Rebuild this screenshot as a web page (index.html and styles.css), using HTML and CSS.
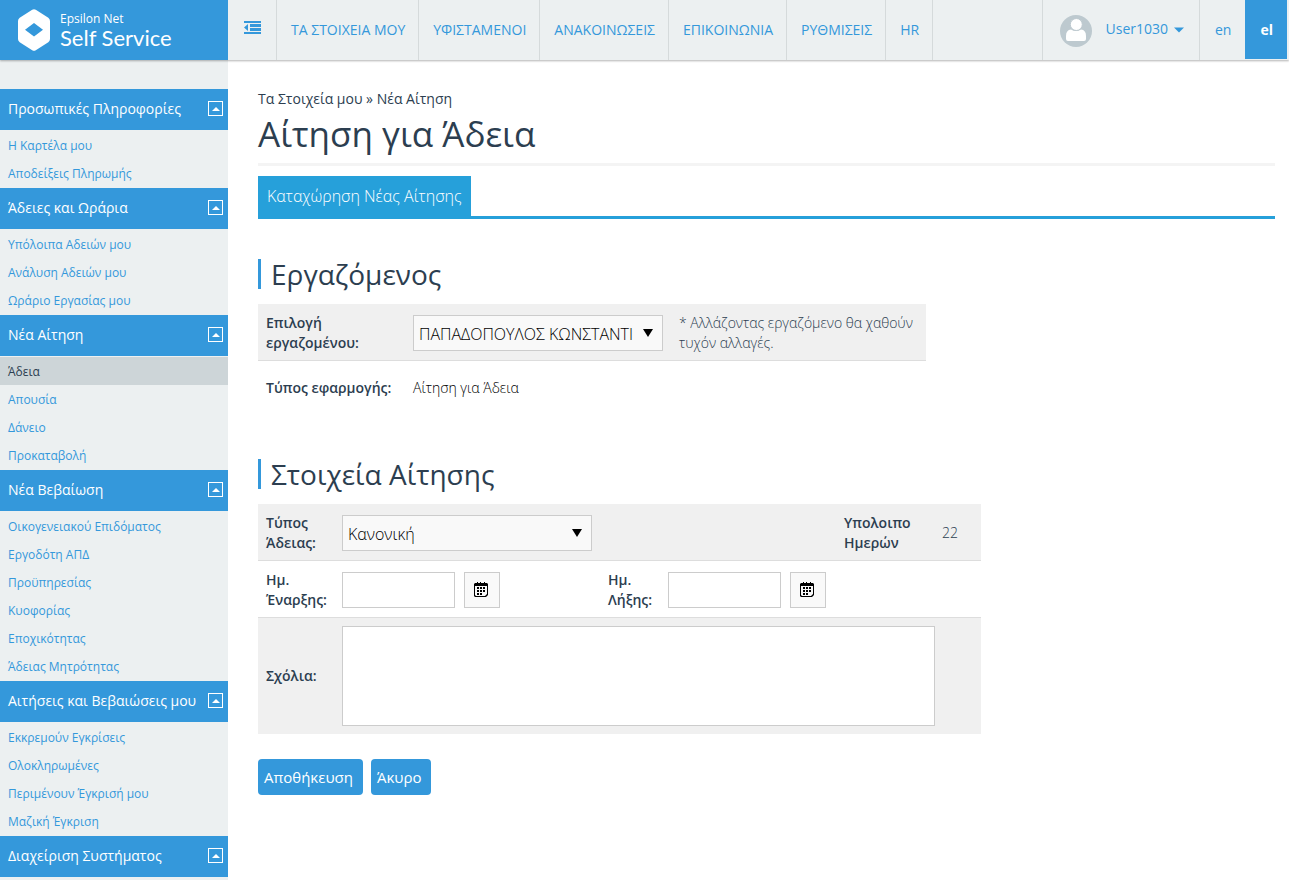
FILE: index.html
```html
<!DOCTYPE html>
<html lang="el">
<head>
<meta charset="utf-8">
<title>Αίτηση για Άδεια</title>
<link rel="stylesheet" href="styles.css">
</head>
<body>
<header class="topbar">
  <a class="brand" href="#">
    <svg class="brand-mark" width="32" height="42" viewBox="0 0 32 42" aria-hidden="true"><path fill="#fff" fill-rule="evenodd" d="M14.2.8Q16-.4 17.800.8L30.300 8.800Q32 10 32 12V30Q32 32 30.300 33.200L17.800 41.200Q16 42.400 14.200 41.200L1.700 33.200Q0 32 0 30V12Q0 10 1.700 8.800ZM16 14L7 20.700 16 27.400 25 20.700Z"/></svg>
    <span class="brand-text"><span class="brand-small">Epsilon Net</span><span class="brand-big">Self Service</span></span>
  </a>
  <button class="toggle" type="button" aria-label="Μενού">
    <svg width="17" height="13" viewBox="0 0 17 13" aria-hidden="true"><path fill="#3498db" d="M0 0h17v2H0zM6 3h11v3H6zM6 7h11v3H6zM0 11h17v2H0zM4 3v7L0 6.500z"/></svg>
  </button>
  <nav class="nav">
    <a href="#">ΤΑ ΣΤΟΙΧΕΙΑ ΜΟΥ</a>
    <a href="#">ΥΦΙΣΤΑΜΕΝΟΙ</a>
    <a href="#">ΑΝΑΚΟΙΝΩΣΕΙΣ</a>
    <a href="#">ΕΠΙΚΟΙΝΩΝΙΑ</a>
    <a href="#">ΡΥΘΜΙΣΕΙΣ</a>
    <a href="#">HR</a>
  </nav>
  <button class="user" type="button">
    <svg width="32" height="32" viewBox="0 0 32 32" aria-hidden="true"><circle cx="16" cy="16" r="16" fill="#bdc9cf"/><path fill="#fff" d="M6 24v-3q0-6 5-6.500 5 3 10 0 5 .5 5 6.500v3q0 2-2 2H8q-2 0-2-2z"/><circle cx="16.300" cy="9.500" r="6" fill="#fff" stroke="#bdc9cf"/></svg>
    <span>User1030</span>
    <svg class="caret" width="10" height="6" viewBox="0 0 10 6" aria-hidden="true"><path fill="#3498db" d="M0 .5h10L5 5.500z"/></svg>
  </button>
  <a class="lang" href="#">en</a>
  <a class="lang lang-active" href="#">el</a>
</header>
<div class="layout">
  <aside class="sidebar">
    <section><h3><button type="button">Προσωπικές Πληροφορίες<i class="fold"></i></button></h3>
      <ul><li><a href="#">Η Καρτέλα μου</a></li><li><a href="#">Αποδείξεις Πληρωμής</a></li></ul></section>
    <section><h3><button type="button">Άδειες και Ωράρια<i class="fold"></i></button></h3>
      <ul><li><a href="#">Υπόλοιπα Αδειών μου</a></li><li><a href="#">Ανάλυση Αδειών μου</a></li><li><a href="#">Ωράριο Εργασίας μου</a></li></ul></section>
    <section><h3><button type="button">Νέα Αίτηση<i class="fold"></i></button></h3>
      <ul><li><a class="current" href="#">Άδεια</a></li><li><a href="#">Απουσία</a></li><li><a href="#">Δάνειο</a></li><li><a href="#">Προκαταβολή</a></li></ul></section>
    <section><h3><button type="button">Νέα Βεβαίωση<i class="fold"></i></button></h3>
      <ul><li><a href="#">Οικογενειακού Επιδόματος</a></li><li><a href="#">Εργοδότη ΑΠΔ</a></li><li><a href="#">Προϋπηρεσίας</a></li><li><a href="#">Κυοφορίας</a></li><li><a href="#">Εποχικότητας</a></li><li><a href="#">Άδειας Μητρότητας</a></li></ul></section>
    <section><h3><button type="button">Αιτήσεις και Βεβαιώσεις μου<i class="fold"></i></button></h3>
      <ul><li><a href="#">Εκκρεμούν Εγκρίσεις</a></li><li><a href="#">Ολοκληρωμένες</a></li><li><a href="#">Περιμένουν Έγκρισή μου</a></li><li><a href="#">Μαζική Έγκριση</a></li></ul></section>
    <section><h3><button type="button">Διαχείριση Συστήματος<i class="fold"></i></button></h3></section>
  </aside>
  <main class="content">
    <p class="crumbs">Τα Στοιχεία μου » Νέα Αίτηση</p>
    <h1>Αίτηση για Άδεια</h1>
    <div class="tabs"><button type="button" class="tab">Καταχώρηση Νέας Αίτησης</button></div>
    <form>
      <h2>Εργαζόμενος</h2>
      <div class="panel">
        <div class="row row-employee shaded">
          <label for="employee">Επιλογή εργαζομένου:</label>
          <span class="select"><select id="employee"><option>ΠΑΠΑΔΟΠΟΥΛΟΣ ΚΩΝΣΤΑΝΤΙ</option></select></span>
          <span class="note">* Αλλάζοντας εργαζόμενο θα χαθούν τυχόν αλλαγές.</span>
        </div>
        <div class="row row-employee last">
          <span class="label">Τύπος εφαρμογής:</span>
          <span class="value">Αίτηση για Άδεια</span>
        </div>
      </div>
      <h2>Στοιχεία Αίτησης</h2>
      <div class="panel">
        <div class="row row-request shaded">
          <label for="kind">Τύπος Άδειας:</label>
          <span class="select"><select id="kind"><option>Κανονική</option></select></span>
          <span class="label days">Υπολοιπο Ημερών</span>
          <span class="note">22</span>
        </div>
        <div class="row row-request">
          <label for="from">Ημ. Έναρξης:</label>
          <span class="date"><input id="from" type="text"><button type="button" aria-label="Ημερολόγιο έναρξης"><svg width="14" height="15" viewBox="0 0 14 15" aria-hidden="true"><path fill="#000" fill-rule="evenodd" d="M3 0h1v1h2V0h1v1h3V0h1v1h2l1 1v11l-2 2H1l-1-1V2l1-1h2zM1 4v9l1 1h9l2-2V4z"/><path fill="#000" d="M6 5h2v2H6zM9 5h2v2H9zM3 8h2v2H3zM6 8h2v2H6zM9 8h2v2H9zM3 11h2v2H3zM6 11h2v2H6zM3 5h2v2H3z"/></svg></button></span>
          <label for="to">Ημ. Λήξης:</label>
          <span class="date"><input id="to" type="text"><button type="button" aria-label="Ημερολόγιο λήξης"><svg width="14" height="15" viewBox="0 0 14 15" aria-hidden="true"><path fill="#000" fill-rule="evenodd" d="M3 0h1v1h2V0h1v1h3V0h1v1h2l1 1v11l-2 2H1l-1-1V2l1-1h2zM1 4v9l1 1h9l2-2V4z"/><path fill="#000" d="M6 5h2v2H6zM9 5h2v2H9zM3 8h2v2H3zM6 8h2v2H6zM9 8h2v2H9zM3 11h2v2H3zM6 11h2v2H6zM3 5h2v2H3z"/></svg></button></span>
        </div>
        <div class="row row-request shaded last notes">
          <label for="comments">Σχόλια:</label>
          <textarea id="comments"></textarea>
        </div>
      </div>
      <div class="actions"><button type="submit">Αποθήκευση</button><button type="button">Άκυρο</button></div>
    </form>
  </main>
</div>
</body>
</html>
```
FILE: styles.css
```css
* { box-sizing: border-box; }
body {
  margin: 0;
  font: 14px/20px "Open Sans", sans-serif;
  color: #2c3e50;
  background: #fff;
}
a { color: #3498db; text-decoration: none; }
button, input, select, textarea { font: inherit; margin: 0; border-radius: 0; }
button { border: 0; background: none; cursor: pointer; }
h1, h2, h3, p, ul { margin: 0; padding: 0; font-weight: 400; }
ul { list-style: none; }

.topbar {
  display: flex;
  height: 60px;
  padding-right: 2px;
  background: #ecf0f1;
  box-shadow: 0 1px 2px rgba(0, 0, 0, 0.3);
  position: relative;
}
.brand {
  display: flex;
  align-items: center;
  gap: 10px;
  width: 228px;
  padding: 0 0 1px 18px;
  background: #3498db;
  color: #fff;
}
.brand-text { display: flex; flex-direction: column; padding-top: 2px; }
.brand-small { font: 12px/14px "Open Sans", sans-serif; }
.brand-big { font: 22px/24px Lato, sans-serif; }
.toggle {
  width: 49px;
  padding: 0 0 3px;
  border-right: 1px solid #d5dadb;
}
.nav { display: flex; flex: 1; }
.nav a {
  padding: 0 13px 0 14px;
  line-height: 60px;
  border-right: 1px solid #d5dadb;
}
.user {
  display: flex;
  align-items: center;
  padding: 1px 15px 0 17px;
  border-left: 1px solid #d5dadb;
  border-right: 1px solid #d5dadb;
  color: #3498db;
}
.user span { margin: 0 6px 4px 14px; }
.caret { margin-bottom: 2px; }
.lang { padding: 0 14px 0 15px; line-height: 59px; }
.lang-active { height: 59px; background: #3498db; color: #fff; font-weight: 700; }

.layout { display: flex; align-items: stretch; }
.sidebar { width: 228px; flex: none; padding: 29px 0 3px; background: #ecf0f1; }
.sidebar h3 { font-size: 14px; }
.sidebar h3 button {
  display: flex;
  align-items: center;
  justify-content: space-between;
  width: 100%;
  height: 41px;
  padding: 0 5px 2px 8px;
  background: #3498db;
  color: #fff;
  text-align: left;
}
.fold {
  display: grid;
  place-items: center;
  width: 15px;
  height: 15px;
  border: 1px solid #fff;
}
.fold::before {
  content: "";
  border: 4px solid transparent;
  border-top: 0;
  border-bottom-color: #fff;
}
.sidebar ul { padding: 1px 0; }
.sidebar li a {
  display: block;
  padding: 2px 8px 0;
  font-size: 12px;
  line-height: 26px;
}
.sidebar .current { background: #cdd5d8; color: #2c3e50; }

.content { flex: 1; padding: 29px 14px 40px 30px; }
h1 {
  font-size: 35px;
  line-height: 50px;
  padding-bottom: 4px;
  border-bottom: 3px solid #f4f4f4;
}
.tabs { display: flex; margin-top: 10px; border-bottom: 3px solid #26a0da; }
.tab {
  height: 40px;
  padding: 0 9px;
  font-size: 16px;
  font-weight: 300;
  background: #26a0da;
  color: #fff;
}
h2 {
  margin: 40px 0 15px;
  padding-left: 10px;
  border-left: 3px solid #3498db;
  font-size: 28px;
  line-height: 30px;
}
.panel { width: fit-content; }
.row {
  display: grid;
  align-items: center;
  column-gap: 16px;
  padding: 9px 8px 7px;
  border-bottom: 1px solid #ddd;
}
.row-employee { grid-template-columns: 131px 250px 239px; }
.row-request { grid-template-columns: 60px 250px 44px 160px 82px 31px; }
.shaded { background: #f0f0f0; }
.last { border-bottom: 0; min-height: 58px; padding-bottom: 13px; }
.row label, .label { font-weight: 600; }
.note, .value { font-weight: 300; }
.value { color: #000; }
.days { grid-column: 5; }
.select { position: relative; display: block; }
.select::after {
  content: "";
  position: absolute;
  top: 14px;
  right: 10px;
  border: 5px solid transparent;
  border-top: 8px solid #000;
  border-bottom: 0;
  pointer-events: none;
}
select {
  appearance: none;
  display: block;
  width: 100%;
  height: 36px;
  padding: 2px 20px 0 5px;
  border: 1px solid #ccc;
  background: #f9f9f9;
  color: #000;
  font-size: 16px;
  font-weight: 300;
}
.date { display: flex; gap: 9px; }
.date input { width: 113px; height: 36px; border: 1px solid #ccc; background: #fff; }
.date button {
  display: grid;
  place-items: center;
  width: 36px;
  height: 36px;
  padding: 0 2px 2px 0;
  border: 1px solid #ccc;
  background: #f9f9f9;
}
.notes { padding: 8px; }
textarea {
  display: block;
  grid-column: 2 / -1;
  width: 593px;
  height: 100px;
  border: 1px solid #ccc;
  background: #fff;
  resize: none;
}
.actions { display: flex; gap: 8px; margin-top: 25px; }
.actions button {
  height: 36px;
  padding: 0 10px 0 6px;
  border-radius: 4px;
  background: #3498db;
  color: #fff;
  font-size: 15px;
}
```
